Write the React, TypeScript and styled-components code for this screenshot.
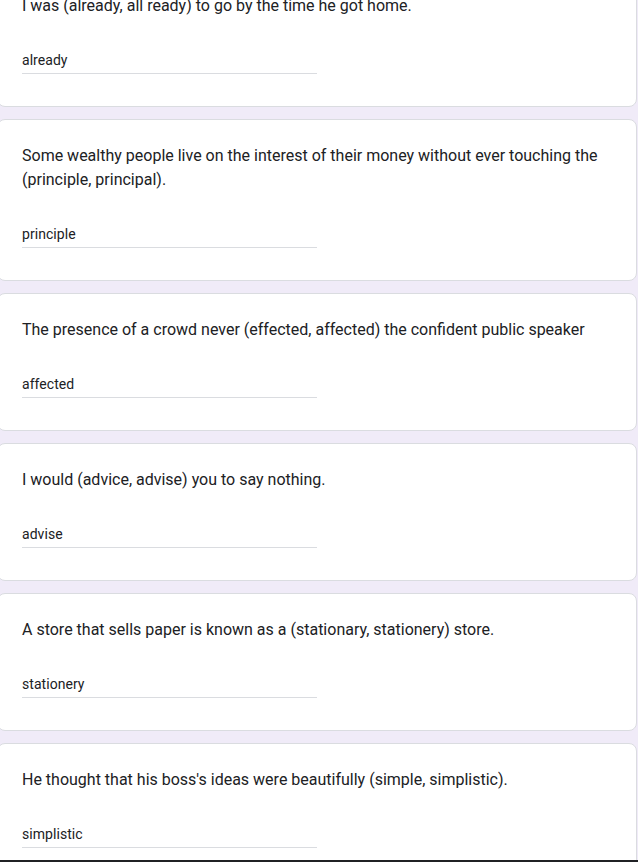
import React from "react";
import styled, { createGlobalStyle } from "styled-components";

const Global = createGlobalStyle`
  html, body { margin: 0; padding: 0; background: #f0ebf8; }
  body { font-family: Roboto, "Noto Sans", Arial, sans-serif; color: #202124; overflow: hidden; }
`;

const Page = styled.div`
  display: flex;
  flex-direction: column;
  gap: 12px;
  margin-top: -31px;
  margin-left: -3px;
  width: 640px;
`;

const Card = styled.div`
  box-sizing: border-box;
  background: #fff;
  border: 1px solid #dadce0;
  border-radius: 8px;
  padding: 24px;
`;

const Question = styled.div`
  font-size: 16px;
  line-height: 24px;
  letter-spacing: 0;
  color: #202124;
`;

const Answer = styled.div`
  box-sizing: border-box;
  width: 295px;
  margin-top: 32px;
  margin-bottom: 8px;
  padding-bottom: 3px;
  border-bottom: 1px solid #dadce0;
  font-size: 14px;
  line-height: 20px;
  letter-spacing: 0.05px;
  color: #202124;
`;

const BottomStrip = styled.div`
  position: fixed;
  left: 0;
  right: 0;
  bottom: 0;
  height: 2px;
  background: #202124;
`;

const items = [
  { q: "I was (already, all ready) to go by the time he got home.", a: "already" },
  {
    q: "Some wealthy people live on the interest of their money without ever touching the (principle, principal).",
    a: "principle",
  },
  { q: "The presence of a crowd never (effected, affected) the confident public speaker", a: "affected" },
  { q: "I would (advice, advise) you to say nothing.", a: "advise" },
  { q: "A store that sells paper is known as a (stationary, stationery) store.", a: "stationery" },
  { q: "He thought that his boss's ideas were beautifully (simple, simplistic).", a: "simplistic" },
];

export default function App() {
  return (
    <>
      <Global />
      <Page>
        {items.map((it, i) => (
          <Card key={i}>
            <Question>{it.q}</Question>
            <Answer>{it.a}</Answer>
          </Card>
        ))}
      </Page>
      <BottomStrip />
    </>
  );
}
